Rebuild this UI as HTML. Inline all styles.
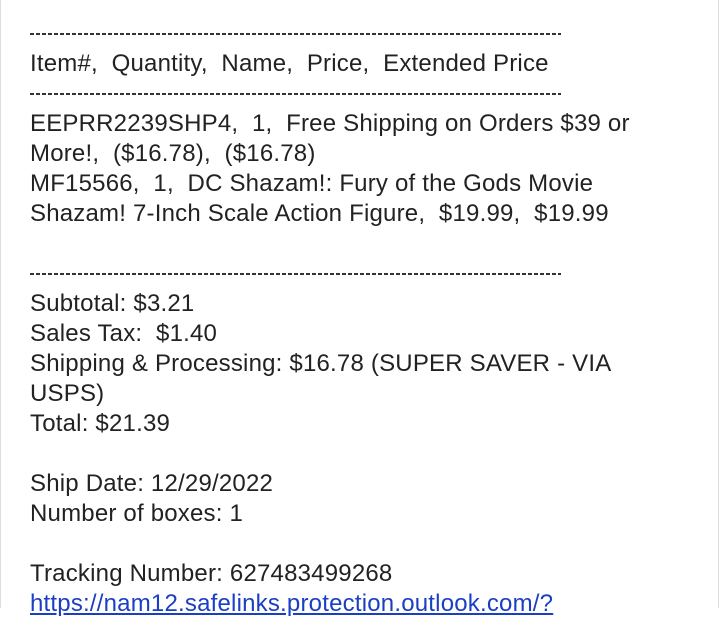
<!DOCTYPE html>
<html><head><style>
html,body{margin:0;padding:0;background:#fff;}
body{width:720px;height:598px;overflow:hidden;position:relative;font-family:"Liberation Sans",sans-serif;}
.frame{position:absolute;left:0;top:-2px;width:717px;height:610px;border-left:1px solid #ddd;border-right:1px solid #ddd;}
.c{position:absolute;left:30px;top:19px;font-size:24px;line-height:30px;color:#222;letter-spacing:0.2px;}
.l{height:30px;white-space:pre;}
.d{height:30px;position:relative;}
.d::after{content:"";position:absolute;left:0;top:14px;width:531px;height:1.5px;background:repeating-linear-gradient(90deg,#333 0 4px,transparent 4px 6px);}
.a{color:#1a3fc4;text-decoration:underline;}
</style></head><body>
<div class="frame"></div>
<div class="c"><div class="d"></div><div class="l">Item#,  Quantity,  Name,  Price,  Extended Price</div><div class="d"></div><div class="l">EEPRR2239SHP4,  1,  Free Shipping on Orders $39 or</div><div class="l">More!,  ($16.78),  ($16.78)</div><div class="l">MF15566,  1,  DC Shazam!: Fury of the Gods Movie</div><div class="l">Shazam! 7-Inch Scale Action Figure,  $19.99,  $19.99</div><div class="l"></div><div class="d"></div><div class="l">Subtotal: $3.21</div><div class="l">Sales Tax:  $1.40</div><div class="l">Shipping &amp; Processing: $16.78 (SUPER SAVER - VIA</div><div class="l">USPS)</div><div class="l">Total: $21.39</div><div class="l"></div><div class="l">Ship Date: 12/29/2022</div><div class="l">Number of boxes: 1</div><div class="l"></div><div class="l">Tracking Number: 627483499268</div><div class="l a">https://nam12.safelinks.protection.outlook.com/?</div></div>
</body></html>
